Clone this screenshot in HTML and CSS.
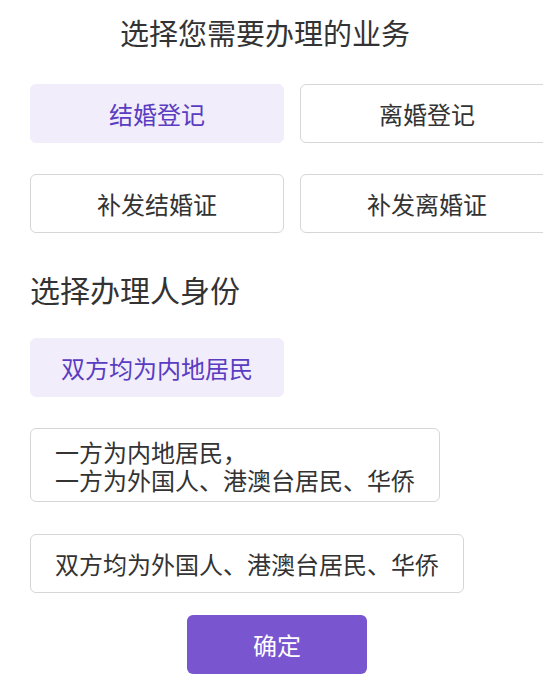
FILE: index.html
```html
<!DOCTYPE html>
<html lang="zh-CN">
<head>
<meta charset="utf-8">
<title>选择业务</title>
<link rel="stylesheet" href="styles.css">
</head>
<body>
<div class="page">
  <h1 class="title">选择您需要办理的业务</h1>
  <div class="grid">
    <div class="opt opt-fixed selected">结婚登记</div>
    <div class="opt opt-fixed">离婚登记</div>
    <div class="opt opt-fixed">补发结婚证</div>
    <div class="opt opt-fixed">补发离婚证</div>
  </div>
  <h2 class="subtitle">选择办理人身份</h2>
  <div class="list">
    <div class="opt opt-fixed selected">双方均为内地居民</div>
    <div class="opt opt-left opt-multi">一方为内地居民，<br>一方为外国人、港澳台居民、华侨</div>
    <div class="opt opt-left opt-last">双方均为外国人、港澳台居民、华侨</div>
  </div>
  <button class="confirm">确定</button>
</div>
</body>
</html>
```
FILE: styles.css
```css
html, body {
  margin: 0;
  padding: 0;
  overflow: hidden;
  background: #fff;
}
body {
  font-family: "Noto Sans CJK SC", "Noto Sans", sans-serif;
  color: #333;
}
.page {
  padding: 12px 0 0 30px;
  width: 600px;
}
.title {
  margin: 0;
  width: 470px;
  text-align: center;
  font-size: 29px;
  font-weight: 400;
  line-height: 40px;
}
.grid {
  margin-top: 32px;
  display: grid;
  grid-template-columns: 254px 254px;
  column-gap: 16px;
  row-gap: 31px;
}
.opt {
  box-sizing: border-box;
  min-height: 59px;
  border: 1px solid #d6d6d6;
  border-radius: 6px;
  background: #fff;
  font-size: 24px;
  line-height: 30px;
  display: flex;
  align-items: center;
}
.opt-fixed {
  width: 254px;
  justify-content: center;
}
.opt-left {
  padding: 6px 24px;
}
.opt-multi {
  line-height: 28px;
  padding: 9px 24px 7px;
}
.opt-last {
  margin-top: 1px;
}
.opt.selected {
  background: #f1edfa;
  border-color: #f1edfa;
  color: #5a3cc2;
}
.subtitle {
  margin: 36px 0 0;
  font-size: 30px;
  font-weight: 400;
  line-height: 40px;
}
.list {
  margin-top: 29px;
  display: flex;
  flex-direction: column;
  align-items: flex-start;
  gap: 31px;
}
.confirm {
  display: block;
  margin: 22px 0 0 157px;
  width: 180px;
  height: 59px;
  border: none;
  border-radius: 6px;
  background: #7a55d0;
  color: #fff;
  font-family: inherit;
  font-size: 24px;
}
```
